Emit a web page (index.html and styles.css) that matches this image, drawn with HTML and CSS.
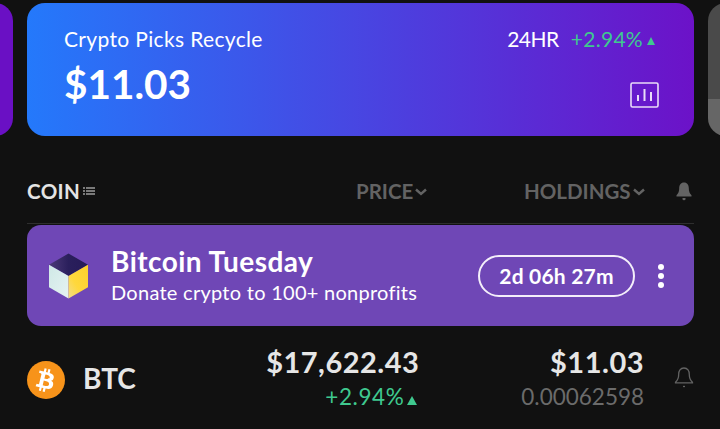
FILE: index.html
```html
<!DOCTYPE html>
<html lang="en">
<head>
    <meta charset="UTF-8">
    <meta name="viewport" content="width=device-width, initial-scale=1.0">
    <title>Portfolio</title>
    <link rel="stylesheet" href="styles.css">
</head>
<body>
    <section class="carousel">
        <div class="card card-prev"></div>
        <div class="card card-main">
            <div class="card-row">
                <span class="card-name">Crypto Picks Recycle</span>
                <span class="card-change">
                    <span class="change-label">24HR</span>
                    <span class="change-value">+2.94%</span>
                    <span class="arrow-up"></span>
                </span>
            </div>
            <div class="card-row card-row-bottom">
                <span class="card-total">$11.03</span>
                <svg class="chart-icon" width="30" height="26" viewBox="0 0 30 26" fill="none" stroke="#e9dcf8">
                    <rect x="1" y="1" width="27" height="24" rx="1.5" stroke-width="1.6"/>
                    <path d="M8 19v-6M14.500 19V7M21 19V10" stroke-width="2"/>
                </svg>
            </div>
        </div>
        <div class="card card-next"></div>
    </section>

    <div class="table-head">
        <span class="head-coin">COIN
            <svg class="list-icon" width="12" height="8" viewBox="0 0 12 8" fill="none" stroke="#e4e4e4">
                <path d="M0 1h2M3 1h9M0 4h2M3 4h9M0 7h2M3 7h9"/>
            </svg>
        </span>
        <span class="head-price">PRICE<svg class="chevron" width="12" height="8" viewBox="0 0 12 8" fill="none" stroke="#636363" stroke-width="2.4"><path d="M1 1.500l5 4.500 5-4.500"/></svg></span>
        <span class="head-holdings">HOLDINGS<svg class="chevron" width="12" height="8" viewBox="0 0 12 8" fill="none" stroke="#636363" stroke-width="2.4"><path d="M1 1.500l5 4.500 5-4.500"/></svg></span>
        <svg class="head-bell" width="18" height="19" viewBox="0 0 18 19" fill="#636363">
            <path d="M9 0.500c3.300 0 4.800 2.600 4.800 5.500 0 3.400 0.800 5.300 2.700 7.200v1.300H1.500v-1.300C3.400 11.300 4.200 9.400 4.200 6 4.200 3.100 5.700 0.500 9 0.500z"/>
            <path d="M7.500 16h3v1.200a1.500 1 0 0 1-3 0z"/>
        </svg>
    </div>

    <section class="promo">
        <svg class="cube" width="42" height="46" viewBox="0 0 42 46">
            <defs>
                <linearGradient id="cubeTop" x1="0" y1="0" x2="1" y2="0">
                    <stop offset="0" stop-color="#4d3a78"/>
                    <stop offset="0.5" stop-color="#2a1f5c"/>
                    <stop offset="1" stop-color="#261a58"/>
                </linearGradient>
                <linearGradient id="cubeLeft" x1="0" y1="0" x2="1" y2="1">
                    <stop offset="0" stop-color="#cfe8e6"/>
                    <stop offset="1" stop-color="#e6f3f2"/>
                </linearGradient>
                <linearGradient id="cubeRight" x1="0" y1="1" x2="1" y2="0">
                    <stop offset="0" stop-color="#f2dc8c"/>
                    <stop offset="0.4" stop-color="#ffd83c"/>
                    <stop offset="1" stop-color="#fdd02c"/>
                </linearGradient>
            </defs>
            <path d="M20.500 0.500L40 11.800 20.500 23 1 11.800z" fill="url(#cubeTop)"/>
            <path d="M1 11.800L20.500 23v22.500L1 34.300z" fill="url(#cubeLeft)"/>
            <path d="M40 11.800V34.300L20.500 45.500V23z" fill="url(#cubeRight)"/>
        </svg>
        <div class="promo-text">
            <div class="promo-title">Bitcoin Tuesday</div>
            <div class="promo-sub">Donate crypto to 100+ nonprofits</div>
        </div>
        <div class="promo-timer">2d 06h 27m</div>
        <div class="promo-more"><i></i><i></i><i></i></div>
    </section>

    <section class="coin-row">
        <div class="coin-name">
            <svg class="coin-logo" width="38" height="38" viewBox="0 0 38 38">
                <circle cx="19" cy="19" r="19" fill="#f7931a"/>
                <path fill="#fff" d="M26.800 16.700c0.400-2.500-1.500-3.800-4.100-4.700l0.800-3.400-2.100-0.500-0.800 3.300-1.700-0.400 0.800-3.300-2.100-0.500-0.800 3.400-4.200-1-0.600 2.200s1.500 0.400 1.500 0.400c0.800 0.200 1 0.800 0.900 1.200l-2.300 9.300c-0.100 0.300-0.400 0.700-1 0.500l-1.500-0.400-1 2.400 4.100 1-0.900 3.400 2.100 0.500 0.800-3.400 1.700 0.400-0.800 3.400 2.100 0.500 0.900-3.400c3.500 0.700 6.200 0.400 7.300-2.800 0.900-2.600 0-4.100-1.900-5 1.400-0.300 2.400-1.200 2.700-3.100zm-4.800 6.700c-0.600 2.600-4.900 1.200-6.300 0.800l1.100-4.600c1.400 0.400 5.900 1.100 5.200 3.800zm0.700-6.800c-0.600 2.300-4.200 1.200-5.300 0.900l1-4.100c1.200 0.300 4.900 0.800 4.300 3.200z"/>
            </svg>
            <span class="coin-symbol">BTC</span>
        </div>
        <div class="coin-price">
            <div class="coin-main">$17,622.43</div>
            <div class="coin-sub coin-up">+2.94%<span class="arrow-up"></span></div>
        </div>
        <div class="coin-holdings">
            <div class="coin-main">$11.03</div>
            <div class="coin-sub coin-amount">0.00062598</div>
        </div>
        <svg class="coin-bell" width="20" height="21" viewBox="0 0 20 21" fill="none" stroke="#636363" stroke-width="1.300">
            <path d="M10 1c3.700 0 5.300 2.900 5.300 6.200 0 3.900 1 6 3.200 8v0.600H1.500v-0.600c2.200-2 3.200-4.100 3.200-8C4.700 3.900 6.300 1 10 1z"/>
            <path d="M9 19.500h2"/>
        </svg>
    </section>
</body>
</html>
```

FILE: styles.css
```css
/* Base */
body {
    margin: 0;
    height: 429px;
    overflow: hidden;
    background-color: #111111;
    color: #e6e6e6;
    font-family: "Lato", "Open Sans", sans-serif;
}

/* Portfolio carousel */
.carousel {
    display: flex;
    justify-content: center;
    gap: 14px;
    box-sizing: border-box;
    margin-top: 3px;
    padding-left: 1px;
    height: 133px;
    overflow: hidden;
}

.card {
    width: 667px;
    flex-shrink: 0;
    border-radius: 18px;
}

.card-prev {
    background-color: #6a10c4;
}

.card-next {
    background: linear-gradient(to bottom, #4a4a4a 0, #4a4a4a 72%, #666666 72%, #666666 100%);
}

.card-main {
    box-sizing: border-box;
    padding: 22px 34px 0 37px;
    color: #ffffff;
    background: linear-gradient(to right, #2479fb, #6c12c8);
}

.card-row {
    display: flex;
    justify-content: space-between;
    align-items: center;
    height: 27px;
}

.card-row-bottom {
    margin-top: 10px;
    height: 50px;
    align-items: flex-start;
}

.card-name {
    font-size: 21px;
    letter-spacing: 0.35px;
}

.card-total {
    font-size: 40.5px;
    font-weight: 700;
    line-height: 44px;
}

.card-change {
    display: flex;
    align-items: center;
    font-size: 21px;
    margin-right: 5px;
}

.change-label {
    letter-spacing: -0.5px;
}

.change-value {
    margin-left: 12px;
    letter-spacing: 0.3px;
    color: #3fc98f;
}

.arrow-up {
    display: inline-block;
    width: 0;
    height: 0;
    margin-left: 4px;
    margin-top: 5px;
    border-left: 4px solid transparent;
    border-right: 4px solid transparent;
    border-bottom: 8px solid #3fc98f;
}

.chart-icon {
    margin-top: 20px;
}

/* Table header */
.table-head {
    display: flex;
    align-items: center;
    box-sizing: border-box;
    height: 88px;
    margin: 0 26px 0 27px;
    padding: 24px 0 1px;
    border-bottom: 1px solid #2e2e2e;
    font-size: 20.5px;
    font-weight: 700;
    color: #636363;
}

.head-coin {
    display: flex;
    align-items: center;
    width: 329px;
    letter-spacing: 0.4px;
    color: #e4e4e4;
}

.list-icon {
    margin-left: 3px;
}

.head-price {
    width: 168px;
}

.head-holdings {
    width: 151px;
}

.chevron {
    margin-left: 2px;
    vertical-align: 3px;
}

/* Promo banner */
.promo {
    display: flex;
    align-items: center;
    height: 101px;
    margin: 1px 26px 0 27px;
    padding: 0 30px 0 21px;
    box-sizing: border-box;
    border-radius: 14px;
    background-color: #6f47b6;
    color: #ffffff;
}

.promo-text {
    flex: 1;
    margin-left: 21px;
    padding-bottom: 2px;
}

.promo-title {
    font-size: 28px;
    font-weight: 700;
    line-height: 34px;
    letter-spacing: 0.45px;
}

.promo-sub {
    font-size: 20px;
    line-height: 28px;
    letter-spacing: 0.27px;
}

.promo-timer {
    width: 157px;
    height: 42px;
    box-sizing: border-box;
    border: 2px solid #f4effa;
    border-radius: 21px;
    font-size: 21px;
    font-weight: 700;
    line-height: 38px;
    letter-spacing: 0.2px;
    text-align: center;
}

.promo-more {
    display: flex;
    flex-direction: column;
    gap: 3px;
    margin-left: 23px;
}

.promo-more i {
    width: 6px;
    height: 6px;
    border-radius: 50%;
    background-color: #ffffff;
}

/* Coin row */
.coin-row {
    display: flex;
    align-items: center;
    box-sizing: border-box;
    height: 103px;
    margin: 0 26px 0 27px;
    padding-top: 5px;
}

.coin-name {
    display: flex;
    align-items: center;
    width: 200px;
}

.coin-symbol {
    margin: 0 0 4px 18px;
    font-size: 28px;
    font-weight: 700;
    color: #e6e6e6;
}

.coin-price,
.coin-holdings {
    text-align: right;
}

.coin-price {
    width: 193px;
}

.coin-holdings {
    width: 225px;
}

.coin-main {
    font-size: 29px;
    font-weight: 700;
    line-height: 34px;
    letter-spacing: 0.5px;
}

.coin-sub {
    font-size: 22.5px;
    line-height: 36px;
}

.coin-up {
    letter-spacing: 0.6px;
    color: #3fc98f;
}

.coin-up .arrow-up {
    margin: 0 2px 0 3px;
    border-left-width: 5px;
    border-right-width: 5px;
    border-bottom-width: 9px;
}

.coin-amount {
    color: #6b6b6b;
}

.coin-bell {
    margin: 0 0 6px 30px;
}
```
